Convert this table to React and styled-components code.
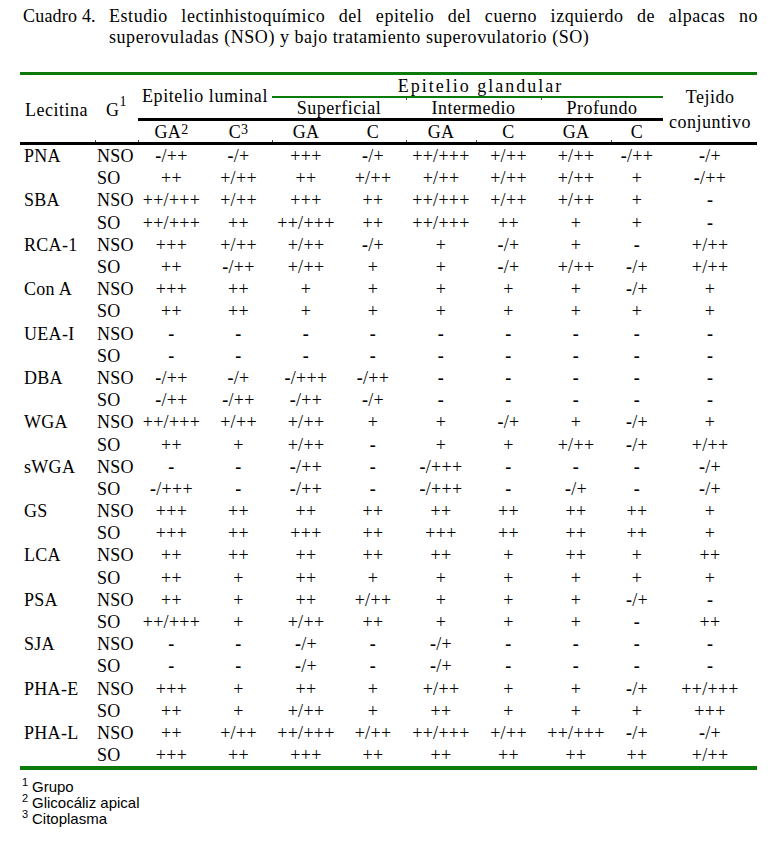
import React from "react";
import styled, { createGlobalStyle } from "styled-components";

const GREEN = "#0b7a0b";

const GlobalStyle = createGlobalStyle`
  body {
    margin: 0;
    background: #ffffff;
    color: #000000;
  }
`;

const lectins = [
  ["PNA", [
    ["-/++", "-/+", "+++", "-/+", "++/+++", "+/++", "+/++", "-/++", "-/+"],
    ["++", "+/++", "++", "+/++", "+/++", "+/++", "+/++", "+", "-/++"],
  ]],
  ["SBA", [
    ["++/+++", "+/++", "+++", "++", "++/+++", "+/++", "+/++", "+", "-"],
    ["++/+++", "++", "++/+++", "++", "++/+++", "++", "+", "+", "-"],
  ]],
  ["RCA-1", [
    ["+++", "+/++", "+/++", "-/+", "+", "-/+", "+", "-", "+/++"],
    ["++", "-/++", "+/++", "+", "+", "-/+", "+/++", "-/+", "+/++"],
  ]],
  ["Con A", [
    ["+++", "++", "+", "+", "+", "+", "+", "-/+", "+"],
    ["++", "++", "+", "+", "+", "+", "+", "+", "+"],
  ]],
  ["UEA-I", [
    ["-", "-", "-", "-", "-", "-", "-", "-", "-"],
    ["-", "-", "-", "-", "-", "-", "-", "-", "-"],
  ]],
  ["DBA", [
    ["-/++", "-/+", "-/+++", "-/++", "-", "-", "-", "-", "-"],
    ["-/++", "-/++", "-/++", "-/+", "-", "-", "-", "-", "-"],
  ]],
  ["WGA", [
    ["++/+++", "+/++", "+/++", "+", "+", "-/+", "+", "-/+", "+"],
    ["++", "+", "+/++", "-", "+", "+", "+/++", "-/+", "+/++"],
  ]],
  ["sWGA", [
    ["-", "-", "-/++", "-", "-/+++", "-", "-", "-", "-/+"],
    ["-/+++", "-", "-/++", "-", "-/+++", "-", "-/+", "-", "-/+"],
  ]],
  ["GS", [
    ["+++", "++", "++", "++", "++", "++", "++", "++", "+"],
    ["+++", "++", "+++", "++", "+++", "++", "++", "++", "+"],
  ]],
  ["LCA", [
    ["++", "++", "++", "++", "++", "+", "++", "+", "++"],
    ["++", "+", "++", "+", "+", "+", "+", "+", "+"],
  ]],
  ["PSA", [
    ["++", "+", "++", "+/++", "+", "+", "+", "-/+", "-"],
    ["++/+++", "+", "+/++", "++", "+", "+", "+", "-", "++"],
  ]],
  ["SJA", [
    ["-", "-", "-/+", "-", "-/+", "-", "-", "-", "-"],
    ["-", "-", "-/+", "-", "-/+", "-", "-", "-", "-"],
  ]],
  ["PHA-E", [
    ["+++", "+", "++", "+", "+/++", "+", "+", "-/+", "++/+++"],
    ["++", "+", "+/++", "+", "++", "+", "+", "+", "+++"],
  ]],
  ["PHA-L", [
    ["++", "+/++", "++/+++", "+/++", "++/+++", "+/++", "++/+++", "-/+", "-/+"],
    ["+++", "++", "+++", "++", "++", "++", "++", "++", "+/++"],
  ]],
];

// Lecitina, G, GA, C, GA, C, GA, C, GA, C, Tejido
const widths = [75, 43, 67, 67, 68, 66, 70, 65, 70, 52, 94];

// cells of the GA/C row that show a tiny rule tick at their left edge
const subHeads = [
  { label: "GA", sup: "2", tick: true },
  { label: "C", sup: "3" },
  { label: "GA", tick: true },
  { label: "C" },
  { label: "GA", tick: true },
  { label: "C", tick: true },
  { label: "GA" },
  { label: "C", tick: true },
];

const renderValue = (v) =>
  v.split(/(-)/).map((part, i) =>
    part === "-" ? <Dash key={i}>-</Dash> : <span key={i}>{part}</span>
  );

const App = () => {
  return (
    <Page>
      <GlobalStyle />
      <Caption>
        <CaptionLabel>Cuadro 4.</CaptionLabel>
        <CaptionBody>
          <CaptionLine $justify>
            Estudio lectinhistoquímico del epitelio del cuerno izquierdo de
            alpacas no
          </CaptionLine>
          <CaptionLine>
            superovuladas (NSO) y bajo tratamiento superovulatorio (SO)
          </CaptionLine>
        </CaptionBody>
      </Caption>

      <Table>
        <colgroup>
          {widths.map((w, i) => (
            <col key={i} style={{ width: w }} />
          ))}
        </colgroup>
        <thead>
          <tr>
            <CornerCell rowSpan={3} $left>
              Lecitina
            </CornerCell>
            <CornerCell rowSpan={3} $tick>
              G<Sup $raise={10}>1</Sup>
            </CornerCell>
            <LuminalCell rowSpan={2} colSpan={2}>
              Epitelio luminal
            </LuminalCell>
            <GlandularCell colSpan={6}>Epitelio glandular</GlandularCell>
            <CornerCell rowSpan={3} $stack>
              Tejido
              <br />
              conjuntivo
            </CornerCell>
          </tr>
          <tr>
            <RegionCell colSpan={2}>Superficial</RegionCell>
            <RegionCell colSpan={2} $topTick>
              Intermedio
            </RegionCell>
            <RegionCell colSpan={2} $topTick>
              Profundo
            </RegionCell>
          </tr>
          <tr>
            {subHeads.map((s, i) => (
              <SubHead key={i} $tick={s.tick}>
                {s.label}
                {s.sup && <Sup $raise={4}>{s.sup}</Sup>}
              </SubHead>
            ))}
          </tr>
        </thead>
        <tbody>
          {lectins.map(([name, pair], li) =>
            pair.map((values, gi) => (
              <DataRow key={`${li}-${gi}`}>
                <NameCell>{gi === 0 ? name : ""}</NameCell>
                <GroupName>{gi === 0 ? "NSO" : "SO"}</GroupName>
                {values.map((v, vi) => (
                  <Value key={vi}>{renderValue(v)}</Value>
                ))}
              </DataRow>
            ))
          )}
        </tbody>
      </Table>

      <Notes>
        <Note>
          <NoteMark>1</NoteMark>Grupo
        </Note>
        <Note>
          <NoteMark>2</NoteMark>Glicocáliz apical
        </Note>
        <Note>
          <NoteMark>3</NoteMark>Citoplasma
        </Note>
      </Notes>
    </Page>
  );
};

export default App;

const Page = styled.div`
  width: 737px;
  padding: 6px 20px 20px 20px;
  font-family: "Liberation Serif", "Times New Roman", serif;
  font-size: 18px;
`;

const Caption = styled.div`
  display: flex;
  line-height: 21px;
  padding-left: 3px;
`;

const CaptionLabel = styled.div`
  width: 86px;
  flex-shrink: 0;
  white-space: nowrap;
  letter-spacing: 0.2px;
`;

const CaptionBody = styled.div`
  flex: 1;
  margin-right: -1px;
`;

const CaptionLine = styled.div`
  white-space: ${(p) => (p.$justify ? "normal" : "nowrap")};
  letter-spacing: 0.55px;
  text-align: ${(p) => (p.$justify ? "justify" : "left")};
  text-align-last: ${(p) => (p.$justify ? "justify" : "auto")};
`;

const Table = styled.table`
  margin-top: 24px;
  width: 737px;
  table-layout: fixed;
  border-collapse: separate;
  border-spacing: 0;
  border-top: 3px solid ${GREEN};
  border-bottom: 4px solid ${GREEN};
  font-size: 18px;
  line-height: 20px;
`;

const Tick = `
  content: "";
  position: absolute;
  left: 0;
  width: 1px;
  height: 2px;
  background: #444;
`;

const CornerCell = styled.th`
  position: relative;
  font-weight: normal;
  padding: 0 0 0 ${(p) => (p.$left ? "5px" : "0")};
  text-align: ${(p) => (p.$left ? "left" : "center")};
  vertical-align: middle;
  letter-spacing: 0.5px;
  line-height: ${(p) => (p.$stack ? "25px" : "20px")};
  border-bottom: 3px solid #000;
  white-space: nowrap;
  ${(p) => (p.$stack ? "padding-top: 2px;" : "padding-top: 3px;")}
  ${(p) => (p.$tick ? `&::after { ${Tick} bottom: 0; }` : "")}
`;

const LuminalCell = styled.th`
  font-weight: normal;
  padding: 0 0 2px 0;
  text-align: center;
  vertical-align: middle;
  white-space: nowrap;
  letter-spacing: 0.6px;
  border-bottom: 3px solid #000;
`;

const GlandularCell = styled.th`
  font-weight: normal;
  height: 21px;
  padding: 0 0 0 26px;
  text-align: center;
  vertical-align: bottom;
  white-space: nowrap;
  letter-spacing: 2px;
  border-bottom: 2px solid ${GREEN};
`;

const RegionCell = styled.th`
  position: relative;
  font-weight: normal;
  height: 20px;
  padding: 0;
  text-align: center;
  vertical-align: middle;
  white-space: nowrap;
  letter-spacing: 0.5px;
  border-bottom: 3px solid #000;
  ${(p) => (p.$topTick ? `&::after { ${Tick} top: 0; }` : "")}
`;

const SubHead = styled.th`
  position: relative;
  font-weight: normal;
  height: 21px;
  padding: 0;
  text-align: center;
  vertical-align: middle;
  letter-spacing: 0.3px;
  border-bottom: 3px solid #000;
  ${(p) => (p.$tick ? `&::after { ${Tick} bottom: 0; }` : "")}
`;

const Sup = styled.span`
  font-size: 14px;
  line-height: 0;
  vertical-align: ${(p) => p.$raise}px;
`;

const DataRow = styled.tr`
  height: 22.2px;
`;

const NameCell = styled.td`
  padding: 0 0 0 4px;
  white-space: nowrap;
  letter-spacing: 0.3px;
`;

const GroupName = styled.td`
  padding: 0 0 0 2px;
  white-space: nowrap;
  letter-spacing: 0.2px;
`;

const Value = styled.td`
  padding: 0;
  text-align: center;
  white-space: nowrap;
  letter-spacing: 0.3px;
`;

const Dash = styled.span`
  font-weight: bold;
`;

const Notes = styled.div`
  margin-top: 9px;
  padding-left: 2px;
  font-family: "Liberation Sans", Arial, sans-serif;
  font-size: 15px;
  line-height: 16px;
`;

const Note = styled.div`
  display: flex;
  align-items: flex-start;
`;

const NoteMark = styled.span`
  font-size: 11px;
  line-height: 10px;
  width: 10px;
  margin-top: -2px;
`;
